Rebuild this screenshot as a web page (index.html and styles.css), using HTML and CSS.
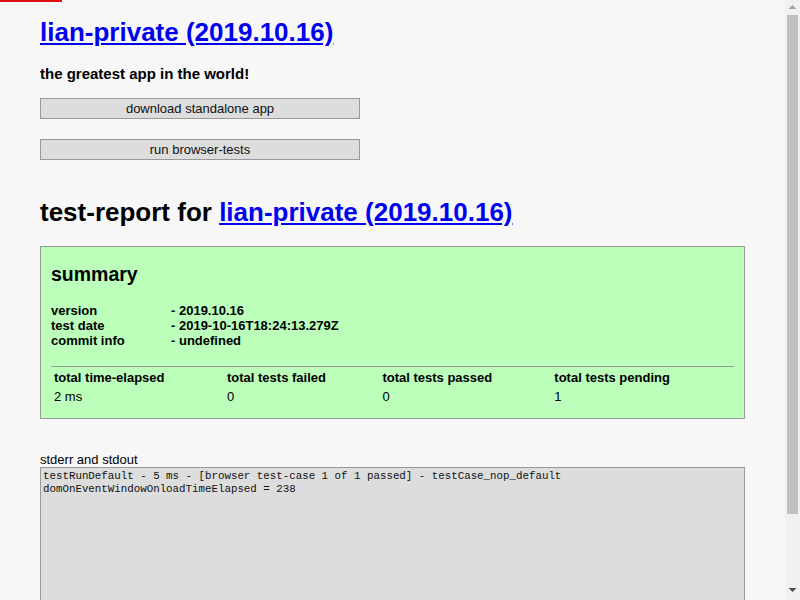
FILE: index.html
```html
<!DOCTYPE html>
<html>
<head>
<meta charset="utf-8">
<title>lian-private (2019.10.16)</title>
<link rel="stylesheet" href="styles.css">
</head>
<body>
<div class="ajax-progress"></div>
<div class="frame">
<div class="page">
  <h1 class="title"><a href="#">lian-private (2019.10.16)</a></h1>
  <h3 class="tagline">the greatest app in the world!</h3>
  <button class="btn btn-first">download standalone app</button>
  <button class="btn">run browser-tests</button>
  <h2 class="title report-title">test-report for <a href="#">lian-private (2019.10.16)</a></h2>
  <div class="summary">
    <h2 class="summary-title">summary</h2>
    <table class="info">
      <tr><td class="info-label">version</td><td>- 2019.10.16</td></tr>
      <tr><td class="info-label">test date</td><td>- 2019-10-16T18:24:13.279Z</td></tr>
      <tr><td class="info-label">commit info</td><td>- undefined</td></tr>
    </table>
    <table class="stats">
      <thead>
        <tr><th>total time-elapsed</th><th>total tests failed</th><th>total tests passed</th><th>total tests pending</th></tr>
      </thead>
      <tbody>
        <tr><td>2 ms</td><td>0</td><td>0</td><td>1</td></tr>
      </tbody>
    </table>
  </div>
  <div class="output-label">stderr and stdout</div>
  <textarea class="output" readonly>testRunDefault - 5 ms - [browser test-case 1 of 1 passed] - testCase_nop_default
domOnEventWindowOnloadTimeElapsed = 238</textarea>
</div>
<div class="rail">
  <svg class="rail-arrow" width="15" height="15" viewBox="0 0 15 15"><path d="M3.5 9 L11.5 9 L7.5 5 Z" fill="#a3a3a3"/></svg>
  <div class="rail-knob"></div>
  <svg class="rail-arrow rail-down" width="15" height="12" viewBox="0 0 15 12"><path d="M3.5 3 L11.5 3 L7.5 7 Z" fill="#505050"/></svg>
</div>
</div>
</body>
</html>
```
FILE: styles.css
```css
html, body {
  margin: 0;
  padding: 0;
  background: #f7f7f7;
  font-family: "Liberation Sans", Arial, sans-serif;
  color: #000;
}
.ajax-progress {
  position: fixed;
  top: 0;
  left: 0;
  width: 62px;
  height: 2px;
  background: #e01010;
  z-index: 2;
}
.frame {
  display: grid;
  grid-template-columns: 1fr 15px;
  align-items: start;
}
.page {
  min-width: 0;
  padding: 0 40px 18px 40px;
}
.rail {
  height: 600px;
  background: #f1f1f1;
  display: flex;
  flex-direction: column;
  align-items: center;
}
.rail-arrow {
  display: block;
  flex: none;
}
.rail-knob {
  flex: none;
  width: 11px;
  height: 499px;
  background: #c1c1c1;
}
.rail-down {
  margin-top: auto;
  margin-bottom: 3px;
}
.title {
  font-size: 26px;
  font-weight: bold;
  line-height: 30px;
  margin: 17px 0 18px 0;
}
.title a {
  color: #0000ee;
}
.tagline {
  font-size: 15px;
  line-height: 17px;
  margin: 0 0 16px 0;
}
.btn {
  display: block;
  width: 320px;
  height: 21px;
  padding: 0;
  margin: 0 0 20px 0;
  background: #dddddd;
  border: 1px solid #999;
  font-family: "Liberation Sans", Arial, sans-serif;
  font-size: 13px;
  color: #111;
}
.report-title {
  margin: 37px 0 19px 0;
}
.summary {
  background: #bbffbb;
  border: 1px solid #999;
  padding: 10px 10px 11px 10px;
}
.summary-title {
  font-size: 19.5px;
  line-height: 23px;
  margin: 6px 0 17px 0;
}
.info {
  border-collapse: collapse;
  font-size: 13px;
  font-weight: bold;
}
.info td {
  padding: 0;
  line-height: 15px;
}
.info-label {
  width: 120px;
}
.stats {
  width: 100%;
  margin-top: 18px;
  border-top: 1px solid #999;
  font-size: 13px;
  text-align: left;
}
.stats th {
  font-weight: bold;
  padding: 1px;
  line-height: 15px;
}
.stats td {
  padding: 1px;
  line-height: 15px;
}
.output-label {
  font-size: 13px;
  line-height: 15px;
  margin-top: 33px;
}
.output {
  display: block;
  box-sizing: border-box;
  width: 100%;
  height: 200px;
  margin: 0;
  padding: 2px;
  background: #dddddd;
  border: 1px solid #999;
  font-family: "Liberation Mono", monospace;
  font-size: 10.8px;
  line-height: 13px;
  color: #111;
  resize: none;
  overflow: hidden;
}
```
